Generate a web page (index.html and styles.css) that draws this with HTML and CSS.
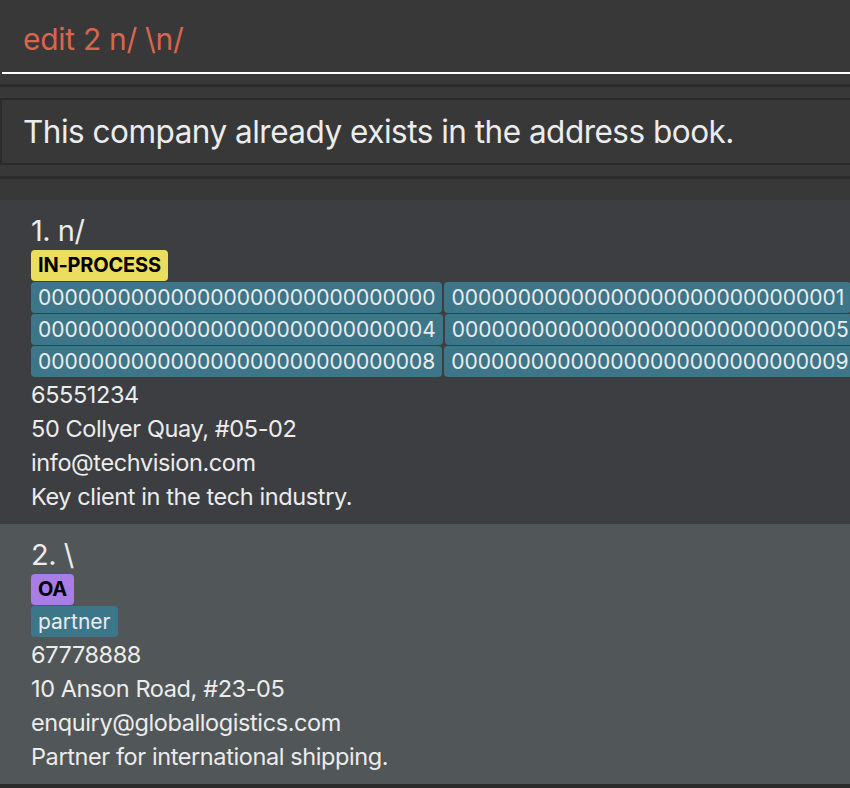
FILE: index.html
```html
<!DOCTYPE html>
<html lang="en">
<head>
<meta charset="utf-8">
<title>Address book</title>
<link rel="stylesheet" href="styles.css">
</head>
<body>
<div class="app">
  <div class="command-box">
    <div class="command-text">edit 2 n/ \n/</div>
  </div>
  <div class="gap-a"></div>
  <div class="divider"></div>
  <div class="gap-b"></div>
  <div class="result-box">
    <div class="result-text">This company already exists in the address book.</div>
  </div>
  <div class="gap-c"></div>
  <div class="divider"></div>
  <div class="gap-d"></div>
  <div class="list">
    <div class="card card-odd">
      <div class="title">1. n/</div>
      <div class="tag-row"><span class="status status-yellow">IN-PROCESS</span></div>
      <div class="tags">
        <span class="tag">000000000000000000000000000000</span>
        <span class="tag">000000000000000000000000000001</span>
        <span class="tag">000000000000000000000000000004</span>
        <span class="tag">000000000000000000000000000005</span>
        <span class="tag">000000000000000000000000000008</span>
        <span class="tag">000000000000000000000000000009</span>
      </div>
      <div class="line">65551234</div>
      <div class="line">50 Collyer Quay, #05-02</div>
      <div class="line">info@techvision.com</div>
      <div class="line">Key client in the tech industry.</div>
    </div>
    <div class="card card-even">
      <div class="title">2. \</div>
      <div class="tag-row"><span class="status status-purple">OA</span></div>
      <div class="tags">
        <span class="tag">partner</span>
      </div>
      <div class="line">67778888</div>
      <div class="line">10 Anson Road, #23-05</div>
      <div class="line">enquiry@globallogistics.com</div>
      <div class="line">Partner for international shipping.</div>
    </div>
  </div>
</div>
</body>
</html>
```

FILE: styles.css
```css
html, body {
  margin: 0;
  padding: 0;
  background: #383838;
  overflow: hidden;
}
body {
  font-family: Inter, "Noto Sans", sans-serif;
  width: 850px;
  height: 788px;
}
.app {
  display: flex;
  flex-direction: column;
  height: 788px;
}
.command-box {
  height: 72px;
  border-bottom: 2px solid #ffffff;
  margin-left: 2px;
  display: flex;
  align-items: center;
  padding-left: 21px;
}
.command-text {
  color: #d9654f;
  font-size: 30px;
  letter-spacing: -0.3px;
  position: relative;
  top: 3px;
}
.gap-a { height: 10px; }
.divider { height: 3px; background: #2b2b2b; }
.gap-b { height: 11px; }
.result-box {
  height: 63px;
  border: 2px solid #2b2b2b;
  border-right: none;
  display: flex;
  align-items: center;
  padding-left: 21px;
}
.result-text {
  color: #ececec;
  font-size: 31.5px;
  letter-spacing: -0.5px;
}
.gap-c { height: 11px; }
.gap-d { height: 21px; }
.list {
  flex: 1;
  display: flex;
  flex-direction: column;
  background: #2b2b2b;
  overflow: hidden;
}
.card {
  padding: 14px 0 10px 31px;
  color: #ececec;
  overflow: hidden;
  flex-shrink: 0;
}
.card-odd { background: #3c3e41; }
.card-even { background: #515658; }
.title {
  font-size: 29px;
  line-height: 34px;
  letter-spacing: -0.5px;
  height: 36px;
}
.tag-row {
  display: flex;
  padding-bottom: 1px;
}
.status {
  height: 31px;
  line-height: 31px;
  padding: 0 7px;
  border-radius: 4px;
  font-weight: 700;
  font-size: 20px;
  letter-spacing: -0.2px;
  color: #000;
}
.status-yellow { background: #ebdd5e; }
.status-purple { background: #a87de6; }
.tags {
  display: flex;
  flex-wrap: wrap;
  gap: 1px 2px;
  padding-bottom: 1px;
  width: 900px;
}
.tag {
  background: #3e7689;
  color: #ececec;
  height: 31px;
  line-height: 31px;
  padding: 0 7px;
  border-radius: 4px;
  font-size: 21px;
}
.line {
  font-size: 23.5px;
  line-height: 34px;
  letter-spacing: -0.4px;
}
```
